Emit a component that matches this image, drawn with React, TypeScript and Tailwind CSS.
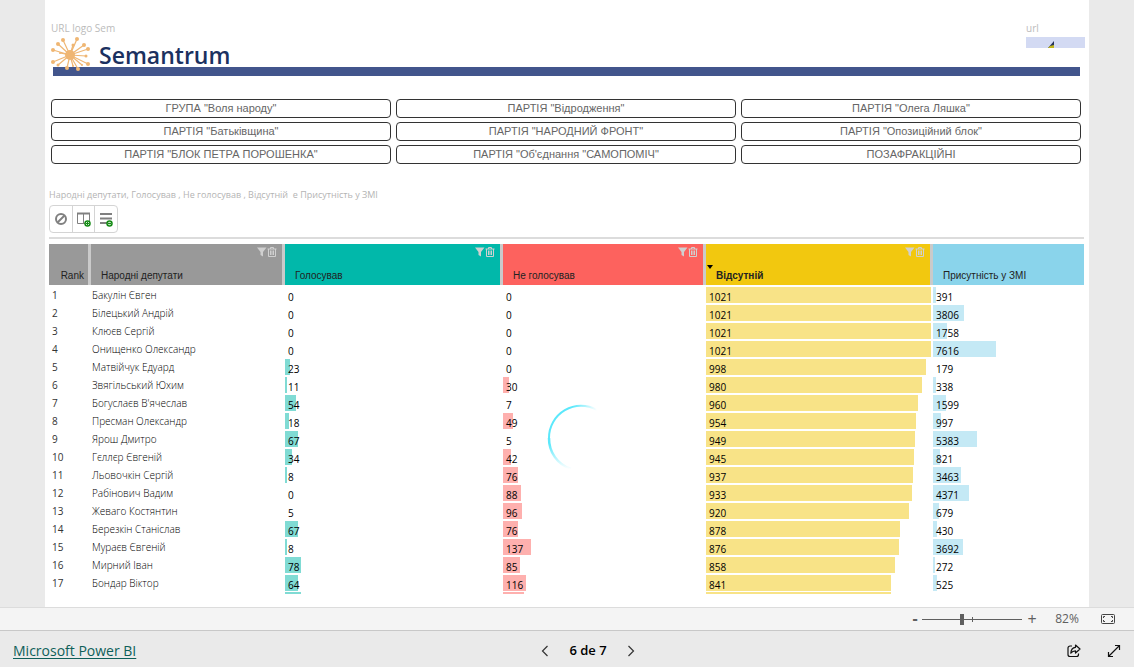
import { useState } from "react";

type Deputy = {
  name: string;
  voted: number;
  against: number;
  absent: number;
  media: number;
};

const parties = [
  'ГРУПА "Воля народу"',
  'ПАРТІЯ "Відродження"',
  'ПАРТІЯ "Олега Ляшка"',
  'ПАРТІЯ "Батьківщина"',
  'ПАРТІЯ "НАРОДНИЙ ФРОНТ"',
  'ПАРТІЯ "Опозиційний блок"',
  'ПАРТІЯ "БЛОК ПЕТРА ПОРОШЕНКА"',
  "ПАРТІЯ \"Об'єднання \"САМОПОМІЧ\"",
  "ПОЗАФРАКЦІЙНІ",
];

const deputies: Deputy[] = [
  { name: "Бакулін Євген",       voted: 0,  against: 0,   absent: 1021, media: 391 },
  { name: "Білецький Андрій",    voted: 0,  against: 0,   absent: 1021, media: 3806 },
  { name: "Клюєв Сергій",        voted: 0,  against: 0,   absent: 1021, media: 1758 },
  { name: "Онищенко Олександр",  voted: 0,  against: 0,   absent: 1021, media: 7616 },
  { name: "Матвійчук Едуард",    voted: 23, against: 0,   absent: 998,  media: 179 },
  { name: "Звягільський Юхим",   voted: 11, against: 30,  absent: 980,  media: 338 },
  { name: "Богуслаєв В'ячеслав", voted: 54, against: 7,   absent: 960,  media: 1599 },
  { name: "Пресман Олександр",   voted: 18, against: 49,  absent: 954,  media: 997 },
  { name: "Ярош Дмитро",         voted: 67, against: 5,   absent: 949,  media: 5383 },
  { name: "Гєллєр Євгеній",      voted: 34, against: 42,  absent: 945,  media: 821 },
  { name: "Льовочкін Сергій",    voted: 8,  against: 76,  absent: 937,  media: 3463 },
  { name: "Рабінович Вадим",     voted: 0,  against: 88,  absent: 933,  media: 4371 },
  { name: "Жеваго Костянтин",    voted: 5,  against: 96,  absent: 920,  media: 679 },
  { name: "Березкін Станіслав",  voted: 67, against: 76,  absent: 878,  media: 430 },
  { name: "Мураєв Євгеній",      voted: 8,  against: 137, absent: 876,  media: 3692 },
  { name: "Мирний Іван",         voted: 78, against: 85,  absent: 858,  media: 272 },
  { name: "Бондар Віктор",       voted: 64, against: 116, absent: 841,  media: 525 },
];

// Bar lengths of the row that is cut off at the bottom of the table
const nextRow = { voted: 78, against: 103, absent: 840 };

// Value that would fill the whole column
const scale = { voted: 1085, against: 1005, absent: 1030, media: 18400 };

function Logo() {
  const nodes = [
    [12, 5, 2], [26, 4, 2], [7, 9, 2], [33, 10, 2], [2, 15, 2], [37, 14, 2],
    [2, 27, 2], [37, 29, 2], [7, 30, 1.5], [16, 33, 2], [27, 34, 2], [35, 21, 1.5],
    [31, 30, 1], [22, 10, 1.5], [9, 18, 1], [22, 31, 1],
  ];
  return (
    <svg viewBox="0 0 40 36" className="w-10 h-9 shrink-0" aria-hidden="true">
      {nodes.map(([x, y, r], i) => (
        <g key={i}>
          <line x1="19" y1="20" x2={x} y2={y} stroke="#efb673" strokeWidth="1.2" />
          <circle cx={x} cy={y} r={r} fill="#efb673" />
        </g>
      ))}
      <circle cx="19" cy="20" r="5" fill="#efb673" />
    </svg>
  );
}

function ColumnTools() {
  return (
    <span className="flex text-[#d0d0d0]">
      <button aria-label="Фільтр">
        <svg viewBox="0 0 10 10" className="w-[10px] h-[10px]" fill="currentColor">
          <path d="M0 0.5h9.500L6 5v4.500L3.500 8V5z" />
        </svg>
      </button>
      <button aria-label="Видалити">
        <svg viewBox="0 0 10 10" className="w-[10px] h-[10px]" fill="none" stroke="currentColor">
          <path d="M0.5 2h9M3.5 2V0.5h3V2M1.5 2v7.5h7V2M3.5 3.5v4.5M5 3.5v4.5M6.5 3.5v4.5" />
        </svg>
      </button>
    </span>
  );
}

type HeadProps = {
  label: string;
  bg: string;
  align?: string;
  last?: boolean;
  sorted?: boolean;
  tools?: boolean;
};

function HeadCell({ label, bg, align = "pl-[10px] text-left", last, sorted, tools }: HeadProps) {
  return (
    <th scope="col" className={`p-0 h-[41px] ${bg} ${last ? "" : "border-r-[3px] border-[#cacaca]"}`}>
      <div className="relative flex flex-col justify-between h-[41px] pt-[3px] pb-[3px]">
        <div className="flex justify-end h-[10px] pr-[5px]">{tools && <ColumnTools />}</div>
        {sorted && (
          <span className="absolute left-[1px] top-[21px] border-x-[3px] border-t-4 border-x-transparent border-t-black" />
        )}
        <span
          className={`${align} text-[10px] leading-3 whitespace-nowrap text-[#222]
            ${sorted ? "font-bold" : "font-normal"}`}
        >
          {label}
        </span>
      </div>
    </th>
  );
}

type BarProps = { value: number; max: number; bg: string; min?: number };

// Values below min are too short to get a bar
function BarCell({ value, max, bg, min = 8 }: BarProps) {
  return (
    <td className="p-0 align-top">
      <div
        className={`mt-px h-4 indent-[3px] text-[10px] leading-5 whitespace-nowrap text-black ${value < min ? "" : bg}`}
        style={{ width: `${(value / max) * 100}%` }}
      >
        {value}
      </div>
    </td>
  );
}

function Toolbar() {
  const button = "flex items-center justify-center w-[22px] first:w-[23px] h-[26px]";
  return (
    <div className="flex self-start rounded border border-[#d4d4d4] divide-x divide-[#d4d4d4]">
      <button className={button} aria-label="Очистити">
        <svg viewBox="0 0 14 14" className="w-[14px] h-[14px]" fill="none" stroke="#808080" strokeWidth="2">
          <circle cx="7" cy="7" r="5" />
          <path d="M3.5 10.5l7-7" strokeWidth="2" />
        </svg>
      </button>
      <button className={button} aria-label="Додати стовпець">
        <svg viewBox="0 0 16 16" className="w-4 h-4" fill="none" stroke="#808080">
          <path d="M1.5 2.5h12v10h-12zM7.5 2.5v10" />
          <path d="M1 2.5h13" strokeWidth="2" />
          <circle cx="11.5" cy="12.5" r="2.5" fill="#fff" stroke="#138a13" strokeWidth="1.5" />
          <path d="M10 12.5h3M11.5 11v3" stroke="#138a13" />
        </svg>
      </button>
      <button className={button} aria-label="Додати рядок">
        <svg viewBox="0 0 16 16" className="w-4 h-4" fill="none" stroke="#808080" strokeWidth="2">
          <path d="M2 3h12M2 7.500h12M2 12h7" />
          <circle cx="11.5" cy="12.5" r="2.5" fill="#fff" stroke="#138a13" strokeWidth="1.5" />
          <path d="M10 12.5h3" stroke="#138a13" strokeWidth="1.5" />
        </svg>
      </button>
    </div>
  );
}

function DeputyTable() {
  return (
    <table className="w-full table-fixed border-separate border-spacing-0">
      <colgroup>
        <col className="w-[42px]" />
        <col className="w-[194px]" />
        <col className="w-[218px]" />
        <col className="w-[203px]" />
        <col className="w-[227px]" />
        <col className="w-[151px]" />
      </colgroup>
      <thead>
        <tr>
          <HeadCell label="Rank" bg="bg-[#999]" align="pr-1 text-right" />
          <HeadCell label="Народні депутати" bg="bg-[#999]" tools />
          <HeadCell label="Голосував" bg="bg-[#01b8aa]" tools />
          <HeadCell label="Не голосував" bg="bg-[#fd625e]" tools />
          <HeadCell label="Відсутній" bg="bg-[#f2c80f]" tools sorted />
          <HeadCell label="Присутність у ЗМІ" bg="bg-[#8ad4eb]" last />
        </tr>
        <tr className="h-px" />
      </thead>
      <tbody className="font-['Open_Sans','Noto_Sans',sans-serif]">
        {deputies.map((d, i) => (
          <tr key={d.name} className="h-[18px]">
            <td className="p-0 pl-[3px] text-[10px] leading-[18px] text-[#333]">{i + 1}</td>
            <td className="p-0 pl-[1px] text-[10px] leading-[18px] font-light whitespace-nowrap text-black">{d.name}</td>
            <BarCell value={d.voted} max={scale.voted} bg="bg-[#80dbd4]" />
            <BarCell value={d.against} max={scale.against} bg="bg-[#feb0ae]" />
            <BarCell value={d.absent} max={scale.absent} bg="bg-[#f8e387]" />
            <BarCell value={d.media} max={scale.media} bg="bg-[#c4e9f5]" min={200} />
          </tr>
        ))}
        <tr aria-hidden="true">
          <td colSpan={2} className="p-0" />
          <td className="p-0">
            <div className="h-[2px] bg-[#80dbd4]" style={{ width: `${(nextRow.voted / scale.voted) * 100}%` }} />
          </td>
          <td className="p-0">
            <div className="h-[2px] bg-[#feb0ae]" style={{ width: `${(nextRow.against / scale.against) * 100}%` }} />
          </td>
          <td className="p-0">
            <div className="h-[2px] bg-[#f8e387]" style={{ width: `${(nextRow.absent / scale.absent) * 100}%` }} />
          </td>
          <td className="p-0" />
        </tr>
      </tbody>
    </table>
  );
}

function Spinner() {
  return (
    <svg viewBox="0 0 68 68" className="absolute left-[48%] top-[404px] w-[68px] h-[68px]" fill="none" aria-hidden="true">
      <defs>
        <linearGradient id="fadeTop" x1="0" y1="0" x2="1" y2="0">
          <stop offset="0.5" stopColor="#5ce8fb" />
          <stop offset="1" stopColor="#5ce8fb" stopOpacity="0" />
        </linearGradient>
        <linearGradient id="fadeBottom" x1="0" y1="0" x2="0" y2="1">
          <stop offset="0.2" stopColor="#5ce8fb" />
          <stop offset="1" stopColor="#5ce8fb" stopOpacity="0" />
        </linearGradient>
      </defs>
      <path d="M3 34A32 32 0 0 1 51 6" stroke="url(#fadeTop)" strokeWidth="2" />
      <path d="M3 34A32 32 0 0 0 25 65" stroke="url(#fadeBottom)" strokeWidth="2.500" />
    </svg>
  );
}

function ZoomBar() {
  const [zoom, setZoom] = useState(82);
  return (
    <div className="flex items-center justify-end h-[23px] pr-[19px] border-t border-[#dcdcdc] bg-[#f4f4f4] text-[#5f5f5f]">
      <button className="w-[14px] pb-[3px] text-base leading-4 font-bold" aria-label="Зменшити" onClick={() => setZoom(zoom - 10)}>-</button>
      <div className="relative flex items-center w-[100px] h-3">
        <input
          type="range"
          min={10}
          max={190}
          value={zoom}
          onChange={e => setZoom(Number(e.target.value))}
          aria-label="Масштаб"
          className="w-full h-px appearance-none bg-[#5f5f5f]
                     [&::-webkit-slider-thumb]:appearance-none [&::-webkit-slider-thumb]:w-1
                     [&::-webkit-slider-thumb]:h-[11px] [&::-webkit-slider-thumb]:bg-[#5f5f5f]"
        />
        <span className="absolute left-1/2 top-1 w-px h-[5px] bg-[#5f5f5f]" />
      </div>
      <button className="w-5 pb-px text-base leading-4" aria-label="Збільшити" onClick={() => setZoom(zoom + 10)}>+</button>
      <span className="w-9 ml-[7px] text-xs text-center">{zoom}%</span>
      <button className="ml-4" aria-label="За розміром сторінки">
        <svg viewBox="0 0 14 10" className="w-[14px] h-[10px]" fill="none" stroke="#444">
          <rect x="0.5" y="0.5" width="13" height="9" rx="1" />
          <path d="M2.5 4V2.5H4M10 2.5h1.5V4M11.5 6v1.5H10M4 7.5H2.5V6" />
        </svg>
      </button>
    </div>
  );
}

function Footer() {
  return (
    <footer className="grid grid-cols-3 items-center h-[37px] px-[13px] pt-[3px] border-t border-[#c8c8c8] bg-[#eaeaea]">
      <a href="#" className="justify-self-start text-sm text-[#0e5f59] underline underline-offset-2">Microsoft Power BI</a>
      <div className="flex items-center justify-center gap-4 pl-[42px]">
        <button aria-label="Попередня сторінка">
          <svg viewBox="0 0 8 12" className="w-2 h-3" fill="none" stroke="#333" strokeWidth="1.2">
            <path d="M6.5 1l-5 5 5 5" />
          </svg>
        </button>
        <span className="px-1 text-[13px] font-semibold text-black whitespace-nowrap">6 de 7</span>
        <button aria-label="Наступна сторінка">
          <svg viewBox="0 0 8 12" className="w-2 h-3" fill="none" stroke="#333" strokeWidth="1.2">
            <path d="M1.5 1l5 5-5 5" />
          </svg>
        </button>
      </div>
      <div className="flex items-center justify-end gap-[26px]">
        <button aria-label="Поділитися">
          <svg viewBox="0 0 14 14" className="w-[14px] h-[14px]" fill="none" stroke="#111" strokeWidth="1.2">
            <path d="M5 2H3a2 2 0 0 0-2 2v6.500a2 2 0 0 0 2 2h6.500a2 2 0 0 0 2-2V9.500" />
            <path d="M8.500 1l4.500 4-4.500 4V6.800C6.500 6.800 5 7.500 3.800 9.200 4 6 5.500 3.600 8.500 3.300z" strokeLinejoin="round" />
          </svg>
        </button>
        <button aria-label="На весь екран">
          <svg viewBox="0 0 14 14" className="w-[14px] h-[14px]" fill="none" stroke="#111" strokeWidth="1.2">
            <path d="M1.500 12.500l11-11M8 1.500h4.500V6M1.500 8v4.500H6" />
          </svg>
        </button>
      </div>
    </footer>
  );
}

export default function App() {
  return (
    <div className="flex flex-col h-screen bg-[#eaeaea] font-['Open_Sans','Noto_Sans',sans-serif]">
      <main className="relative flex flex-col flex-1 min-h-0 overflow-hidden mx-[45px] pl-1 pr-[5px] pt-[21px] bg-white">
        <header className="relative h-[57px] shrink-0">
          <div className="absolute inset-x-1 top-[46px] h-[9px] bg-[#42558c]" />
          <div className="relative flex justify-between">
            <div className="pl-[2px]">
              <p className="text-[10px] leading-[14px] text-[#bbb]">URL logo Sem</p>
              <div className="flex items-center gap-2">
                <Logo />
                <span className="pt-1 text-[23px] leading-8 font-semibold text-[#1b3160]">Semantrum</span>
              </div>
            </div>
            <div className="w-[58px]">
              <p className="text-[10px] leading-[14px] text-[#bbb]">url</p>
              <svg viewBox="0 0 59 11" className="w-[59px] h-[11px] mt-[2px]" aria-hidden="true">
                <rect width="59" height="11" fill="#d3daf3" />
                <path d="M28 4v7h-6z" fill="#26335a" />
                <path d="M28 8v3h-6l2-2z" fill="#c2b51c" />
              </svg>
            </div>
          </div>
        </header>

        <div className="grid grid-cols-3 gap-x-[5px] gap-y-1 mt-[21px] pl-[2px] pr-[3px] font-['Liberation_Sans',Arial,sans-serif]">
          {parties.map(party => (
            <button key={party} className="h-[19px] pb-px rounded border border-[#333] text-[11px] leading-4 text-[#666]">
              {party}
            </button>
          ))}
        </div>

        <p className="mt-[23px] mb-[2px] text-[9px] leading-4 whitespace-pre text-[#b4b4b4]">
          {"Народні депутати, Голосував , Не голосував , Відсутній  е Присутність у ЗМІ"}
        </p>
        <Toolbar />
        <div className="shrink-0 h-[2px] mt-1 mb-[5px] bg-[#dcdcdc]" />
        <div className="flex-1 min-h-0 overflow-hidden mb-[13px] font-['Liberation_Sans',Arial,sans-serif]">
          <DeputyTable />
        </div>
        <Spinner />
      </main>
      <ZoomBar />
      <Footer />
    </div>
  );
}
